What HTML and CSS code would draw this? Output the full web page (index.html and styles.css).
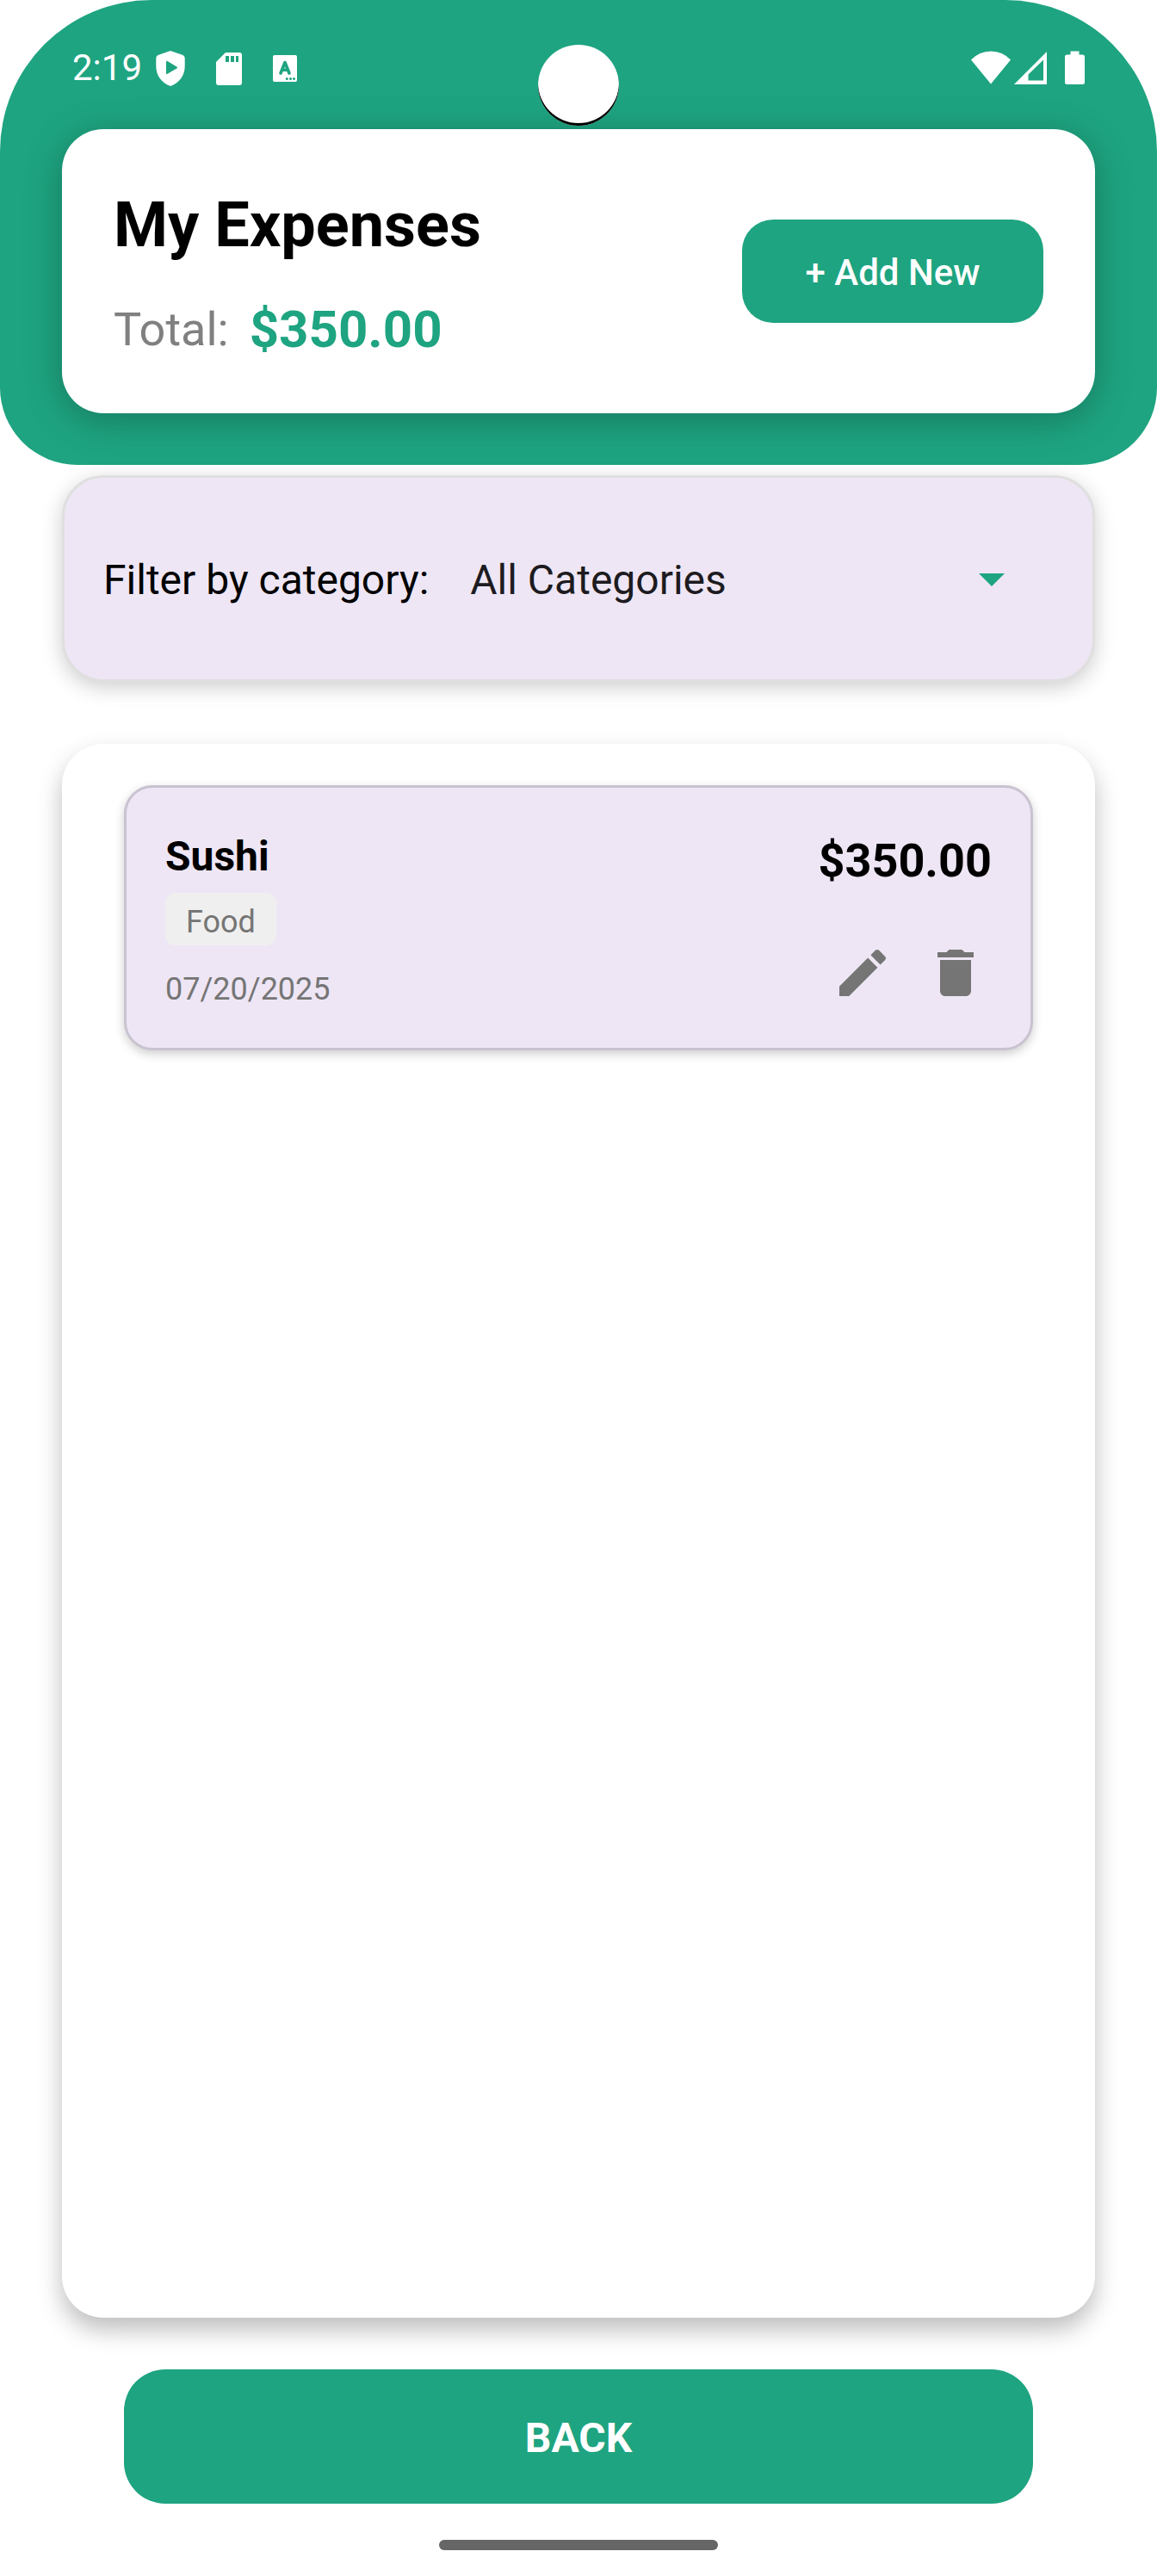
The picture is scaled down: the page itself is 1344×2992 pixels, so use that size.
FILE: index.html
```html
<!DOCTYPE html>
<html lang="en">
<head>
  <meta charset="utf-8">
  <meta name="viewport" content="width=device-width, initial-scale=1">
  <title>My Expenses</title>
  <link rel="stylesheet" href="styles.css">
</head>
<body>
  <div class="screen">
    <header class="header">
      <div class="status-bar">
        <span class="status-time">2:19</span>
        <div class="status-icons">
          <svg class="icon-shield" width="34" height="44" viewBox="0 0 34 44" aria-hidden="true">
            <path fill="#fff" fill-rule="evenodd" d="M17 2 31.500 7Q33.700 8 33.700 10.500V20C33.700 31 27 39.500 17 43 7 39.500 .3 31 .3 20V10.500Q.3 8 2.500 7ZM12 14.300V28.500Q12.400 29.500 13.500 28.800L24.700 22.300Q25.300 21.500 24.700 20.700L13.500 14Q12.400 13.500 12 14.300Z"/>
          </svg>
          <svg class="icon-sd" width="30" height="44" viewBox="0 0 30 44" aria-hidden="true">
            <path fill="#fff" fill-rule="evenodd" d="M11 4H27Q30 4 30 7V39Q30 42 27 42H3Q0 42 0 39V15ZM11 8V15H15V8ZM17 8V15H21V8ZM23 8V15H26V8Z"/>
          </svg>
          <svg class="icon-a" width="28" height="44" viewBox="0 0 28 44" aria-hidden="true">
            <rect x="0" y="7" width="28" height="31" rx="2" fill="#fff"/>
            <g fill="none" stroke="#1ea480" stroke-linecap="round" stroke-linejoin="round">
              <path stroke-width="3.600" d="M9 28 14 15.500 19 28M11 24.300H17"/>
              <path stroke-width="3" d="M16.300 34.500h.01M20.500 34.500h.01M24.500 34.500h.01"/>
            </g>
          </svg>
        </div>
        <div class="status-system">
          <svg width="46" height="44" viewBox="0 0 46 44" aria-hidden="true">
            <path fill="#fff" d="M0 12.500Q9.500 2.500 23 2.500T46 12.500L23 40.500Z"/>
          </svg>
          <svg width="38" height="44" viewBox="0 0 38 44" aria-hidden="true">
            <path fill="#fff" fill-rule="evenodd" d="M38 3V41H0ZM34 12.500 16.500 29.500V36.500H34Z"/>
          </svg>
          <svg class="icon-battery" width="23" height="44" viewBox="0 0 23 44" aria-hidden="true">
            <path fill="#fff" d="M6.500 2.500H16.500V6.500H20.500Q23 6.500 23 9V38.500Q23 41 20.500 41H2.500Q0 41 0 38.500V9Q0 6.500 2.500 6.500H6.500Z"/>
          </svg>
        </div>
        <span class="camera"></span>
      </div>
      <section class="summary">
        <div class="summary-text">
          <h1 class="title">My Expenses</h1>
          <p class="total">
            <span class="total-label">Total:</span>
            <strong class="total-value">$350.00</strong>
          </p>
        </div>
        <button class="add-button" type="button">+ Add New</button>
      </section>
    </header>

    <main class="content">
      <div class="filter">
        <label class="filter-label" for="category">Filter by category:</label>
        <div class="filter-field">
          <select class="filter-select" id="category">
            <option>All Categories</option>
            <option>Food</option>
          </select>
          <svg class="filter-arrow" width="30" height="15" viewBox="0 0 30 15" aria-hidden="true">
            <path fill="#1ea480" d="M0 0H30L15 15Z"/>
          </svg>
        </div>
      </div>

      <ul class="expenses">
        <li class="expense">
          <div class="expense-info">
            <h2 class="expense-name">Sushi</h2>
            <span class="expense-category">Food</span>
            <time class="expense-date" datetime="2025-07-20">07/20/2025</time>
          </div>
          <div class="expense-side">
            <span class="expense-amount">$350.00</span>
            <div class="expense-actions">
              <button class="icon-button" type="button" aria-label="Edit">
                <svg width="72" height="72" viewBox="0 0 24 24" aria-hidden="true">
                  <path fill="#757575" d="M3 17.250V21h3.750L17.810 9.940l-3.750-3.750L3 17.250zM20.710 7.040c.39-.39.39-1.020 0-1.410l-2.340-2.340c-.39-.39-1.020-.39-1.410 0l-1.830 1.830 3.750 3.750 1.830-1.830z"/>
                </svg>
              </button>
              <button class="icon-button" type="button" aria-label="Delete">
                <svg width="72" height="72" viewBox="0 0 24 24" aria-hidden="true">
                  <path fill="#757575" d="M6 19c0 1.100.9 2 2 2h8c1.100 0 2-.9 2-2V7H6v12zM19 4h-3.500l-1-1h-5l-1 1H5v2h14V4z"/>
                </svg>
              </button>
            </div>
          </div>
        </li>
      </ul>

      <button class="back-button" type="button">BACK</button>
    </main>

    <div class="nav-bar"><span class="nav-handle"></span></div>
  </div>
</body>
</html>
```

FILE: styles.css
```css
:root {
  --green: #1ea480;
  --lilac: #eee6f5;
  --grey: #757575;
}

* {
  box-sizing: border-box;
}

body {
  margin: 0;
  background: #fff;
  color: #000;
  font-family: Roboto, "Liberation Sans", sans-serif;
}

button,
select {
  font-family: inherit;
  border: 0;
  cursor: pointer;
}

h1,
h2,
p,
ul {
  margin: 0;
  padding: 0;
}

svg {
  display: block;
}

.screen {
  display: flex;
  flex-direction: column;
  min-height: 100vh;
}

/* Header */

.header {
  padding: 0 72px 60px;
  background: var(--green);
  border-radius: 176px 176px 90px 90px;
  overflow: hidden;
}

.status-bar {
  position: relative;
  display: flex;
  align-items: center;
  height: 150px;
  padding: 54px 12px 46px;
}

.status-time {
  color: #fff;
  font-size: 42px;
  line-height: 50px;
}

.status-icons {
  display: flex;
  gap: 36px;
  margin-left: 16px;
}

.status-system {
  display: flex;
  gap: 4px;
  margin-left: auto;
}

.icon-battery {
  margin-left: 17px;
}

.camera {
  position: absolute;
  top: 52px;
  left: 50%;
  width: 94px;
  height: 94px;
  margin-left: -47px;
  border-radius: 50%;
  background: #fff;
  box-shadow: inset 0 -3px 0 #000;
}

.summary {
  display: flex;
  align-items: center;
  justify-content: space-between;
  padding: 60px;
  background: #fff;
  border-radius: 48px;
  box-shadow: 0 8px 44px rgba(0, 0, 0, 0.26);
}

.summary-text {
  display: flex;
  flex-direction: column;
  gap: 32px;
}

.title {
  font-size: 72px;
  font-weight: 700;
  line-height: 104px;
}

.total {
  display: flex;
  align-items: center;
  gap: 24px;
  line-height: 74px;
}

.total-label {
  color: #808080;
  font-size: 54px;
}

.total-value {
  color: var(--green);
  font-size: 60px;
  font-weight: 700;
}

.add-button {
  min-width: 350px;
  height: 120px;
  padding: 2px 72px 0;
  background: var(--green);
  border-radius: 36px;
  color: #fff;
  font-size: 42px;
  font-weight: 500;
}

/* Content */

.content {
  flex: 1;
  display: flex;
  flex-direction: column;
  padding: 12px 72px 42px;
}

.filter {
  display: flex;
  align-items: center;
  gap: 24px;
  margin-bottom: 72px;
  padding: 60px 45px 57px;
  background: var(--lilac);
  border: 3px solid #dfdfdf;
  border-radius: 48px;
  box-shadow: 0 6px 24px rgba(0, 0, 0, 0.2);
  font-size: 48px;
}

.filter-field {
  flex: 1;
  display: grid;
  align-items: center;
}

.filter-select {
  grid-area: 1 / 1;
  height: 117px;
  padding: 0 96px 0 24px;
  appearance: none;
  background: transparent;
  color: #1d1b20;
  font-size: 48px;
}

.filter-arrow {
  grid-area: 1 / 1;
  justify-self: end;
  margin-right: 57px;
  pointer-events: none;
}

.expenses {
  flex: 1;
  margin-bottom: 60px;
  padding: 48px 72px;
  background: #fff;
  border-radius: 48px;
  box-shadow: 0 14px 28px rgba(0, 0, 0, 0.26);
  list-style: none;
}

.expense {
  display: flex;
  justify-content: space-between;
  padding: 45px;
  background: var(--lilac);
  border: 3px solid #c9c3d1;
  border-radius: 33px;
  box-shadow: 0 4px 12px rgba(0, 0, 0, 0.2);
}

.expense-info {
  display: flex;
  flex-direction: column;
  align-items: flex-start;
}

.expense-name {
  font-size: 48px;
  font-weight: 700;
  line-height: 70px;
}

.expense-category {
  margin: 7px 0 28px;
  padding: 11px 24px 4px;
  background: #efefef;
  border-radius: 12px;
  color: var(--grey);
  font-size: 36px;
  line-height: 46px;
}

.expense-date {
  color: var(--grey);
  font-size: 36px;
  line-height: 46px;
}

.expense-side {
  display: flex;
  flex-direction: column;
  align-items: flex-end;
  justify-content: space-between;
}

.expense-amount {
  font-size: 54px;
  font-weight: 700;
  line-height: 80px;
}

.expense-actions {
  display: flex;
  gap: 24px;
}

.icon-button {
  padding: 6px;
  background: transparent;
}

.back-button {
  height: 156px;
  margin: 0 72px;
  padding: 2px 0 0;
  background: var(--green);
  border-radius: 48px;
  color: #fff;
  font-size: 48px;
  font-weight: 700;
}

/* Gesture bar */

.nav-bar {
  display: flex;
  justify-content: center;
  padding-bottom: 30px;
}

.nav-handle {
  width: 324px;
  height: 12px;
  background: #666;
  border-radius: 6px;
}
```
